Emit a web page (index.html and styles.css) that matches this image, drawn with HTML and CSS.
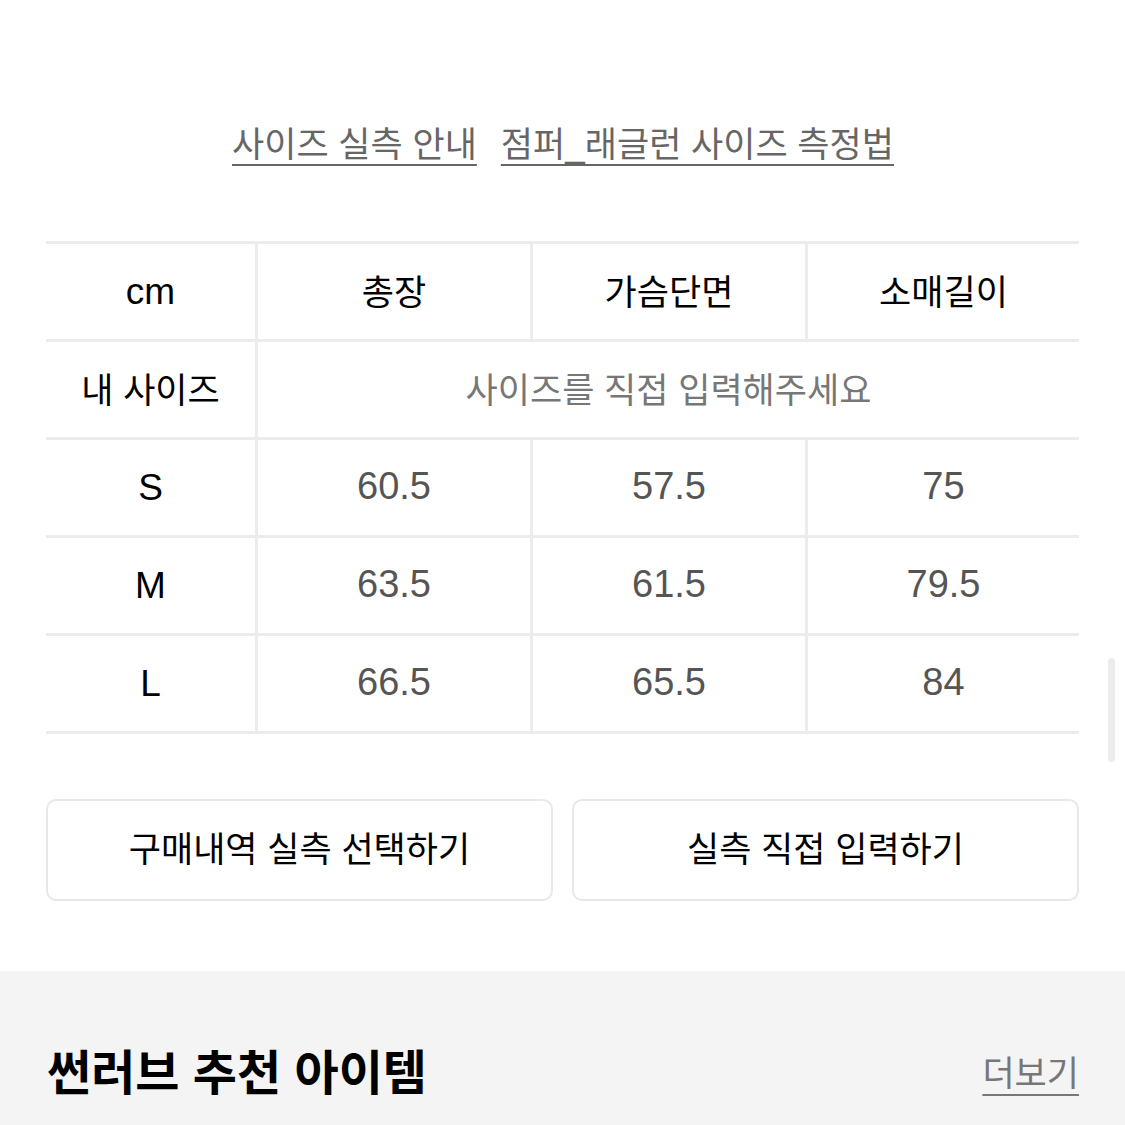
FILE: index.html
```html
<!DOCTYPE html>
<html lang="ko">
<head>
<meta charset="utf-8">
<link rel="stylesheet" href="styles.css">
</head>
<body>
<div class="page">
  <section class="size-section">
    <div class="guide-links">
      <a class="guide-link">사이즈 실측 안내</a>
      <a class="guide-link">점퍼_래글런 사이즈 측정법</a>
    </div>
    <div class="size-table">
      <div class="cell head first latin">cm</div>
      <div class="cell head">총장</div>
      <div class="cell head">가슴단면</div>
      <div class="cell head">소매길이</div>

      <div class="cell head first">내 사이즈</div>
      <div class="cell placeholder span3">사이즈를 직접 입력해주세요</div>

      <div class="cell head first latin">S</div>
      <div class="cell val">60.5</div>
      <div class="cell val">57.5</div>
      <div class="cell val">75</div>

      <div class="cell head first latin">M</div>
      <div class="cell val">63.5</div>
      <div class="cell val">61.5</div>
      <div class="cell val">79.5</div>

      <div class="cell head first latin">L</div>
      <div class="cell val">66.5</div>
      <div class="cell val">65.5</div>
      <div class="cell val">84</div>
    </div>
    <div class="actions">
      <button class="action-btn">구매내역 실측 선택하기</button>
      <button class="action-btn">실측 직접 입력하기</button>
    </div>
  </section>
  <section class="recommend">
    <h2 class="recommend-title">썬러브 추천 아이템</h2>
    <a class="more-link">더보기</a>
  </section>
  <div class="scroll-thumb"></div>
</div>
</body>
</html>
```
FILE: styles.css
```css
html, body {
  margin: 0;
  padding: 0;
  background: #ffffff;
}
body {
  font-family: "Liberation Sans", "Noto Sans CJK KR", sans-serif;
  color: #000;
}
.page {
  position: relative;
  width: 1125px;
  height: 1125px;
  overflow: hidden;
}
.size-section {
  padding: 121px 46px 70px 46px;
}
.guide-links {
  display: flex;
  justify-content: center;
  gap: 24px;
  height: 48px;
  margin-left: 1px;
}
.guide-link {
  font-size: 35px;
  line-height: 48px;
  color: #666;
  text-decoration: underline;
  text-decoration-thickness: 2px;
  text-underline-offset: 7px;
}
.size-table {
  margin-top: 72px;
  display: grid;
  grid-template-columns: 209px 275px 275px 274px;
  border-top: 3px solid #ececec;
}
.cell {
  box-sizing: border-box;
  height: 98px;
  padding-bottom: 5px;
  border-bottom: 3px solid #ececec;
  display: flex;
  align-items: center;
  justify-content: center;
  font-size: 35px;
  border-left: 3px solid #ececec;
}
.cell.first {
  border-left: none;
}
.head {
  color: #000;
}
.latin {
  font-size: 37px;
  padding-bottom: 0;
}
.val {
  font-size: 38px;
  color: #555;
  padding-bottom: 2px;
}
.placeholder {
  color: #777;
}
.span3 {
  grid-column: span 3;
}
.actions {
  margin-top: 65px;
  display: flex;
  gap: 19px;
}
.action-btn {
  flex: 1;
  height: 102px;
  background: #fff;
  border: 2px solid #e8e8e8;
  border-radius: 10px;
  font-family: "Liberation Sans", "Noto Sans CJK KR", sans-serif;
  font-size: 35px;
  color: #000;
  padding: 0 0 8px 0;
}
.recommend {
  background: #f4f4f4;
  height: 155px;
  box-sizing: border-box;
  padding: 70px 46px 0 47px;
  display: flex;
  align-items: flex-start;
  justify-content: space-between;
}
.recommend-title {
  margin: 0;
  font-size: 48px;
  font-weight: 700;
  line-height: 66px;
}
.more-link {
  font-size: 35px;
  line-height: 66px;
  color: #777;
  text-decoration: underline;
  text-decoration-thickness: 2px;
  text-underline-offset: 8px;
}
.scroll-thumb {
  position: absolute;
  left: 1108px;
  top: 658px;
  width: 7px;
  height: 104px;
  border-radius: 4px;
  background: #ececec;
}
```
